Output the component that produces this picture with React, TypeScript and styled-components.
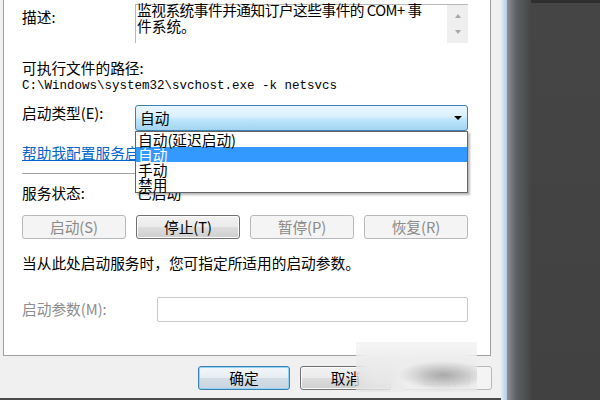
import React from "react";
import styled, { createGlobalStyle } from "styled-components";

const GlobalStyle = createGlobalStyle`
  html, body { margin: 0; padding: 0; width: 600px; height: 400px; overflow: hidden; background: #454545; }
  #root { width: 600px; height: 400px; }
  * { box-sizing: border-box; }
`;

const Screen = styled.div`
  width: 600px;
  height: 400px;
  display: flex;
  overflow: hidden;
  font-family: "Noto Sans CJK SC", "Noto Sans", sans-serif;
  font-size: 14.7px;
  line-height: 16px;
  color: #000;
`;

const Dialog = styled.div`
  position: relative;
  flex: none;
  width: 501px;
  height: 400px;
  background: #f0f0f0;
  display: flex;
  flex-direction: column;
  border-bottom: 2px solid #4a4a4a;
`;

const Frame = styled.div`
  flex: none;
  width: 6px;
  background: linear-gradient(to right, #e4edf7, #b3cbe4);
`;

const Shade = styled.div`
  flex: none;
  width: 24px;
  background: linear-gradient(to right, #8a9097, #5c5f63 40%, #454545);
`;

const Desktop = styled.div`
  flex: 1;
  background: linear-gradient(#2f2f2f 0 3px, #454545 3px, #414141);
`;

const Panel = styled.div`
  margin-left: 3px;
  width: 488px;
  height: 356px;
  flex: none;
  background: #fff;
  border: 1px solid #a0a0a0;
  border-top: none;
  padding: 0 22px 0 18px;
  display: flex;
  flex-direction: column;
`;

const Row = styled.div<{ $top: number; $h?: number }>`
  display: flex;
  align-items: flex-start;
  margin-top: ${(p) => p.$top}px;
  ${(p) => (p.$h ? `height: ${p.$h}px;` : "")}
  flex: none;
`;

const Label = styled.div<{ $w: number; $pt?: number; $muted?: boolean }>`
  flex: none;
  width: ${(p) => p.$w}px;
  padding-top: ${(p) => p.$pt ?? 0}px;
  color: ${(p) => (p.$muted ? "#8d8d8d" : "#000")};
  white-space: nowrap;
`;

const TextBox = styled.div`
  flex: 1;
  height: 39px;
  display: flex;
  border-top: 1px solid #b8b8b8;
  border-left: 1px solid #b8b8b8;
`;

const DescText = styled.div`
  flex: 1;
  margin-top: -3px;
  padding-left: 1px;
  white-space: nowrap;
`;

const Line = styled.span<{ $tight?: boolean }>`
  display: block;
  letter-spacing: ${(p) => (p.$tight ? "-0.5px" : "0")};
`;

const ScrollBar = styled.div`
  flex: none;
  width: 21px;
  background: #efefef;
  display: flex;
  flex-direction: column;
  align-items: center;
  justify-content: space-between;
  padding: 9px 0 9px;
`;

const Arrow = styled.div<{ $dir: "up" | "down"; $color?: string }>`
  width: 0;
  height: 0;
  border-left: 3.5px solid transparent;
  border-right: 3.5px solid transparent;
  ${(p) =>
    p.$dir === "up"
      ? `border-bottom: 4px solid ${p.$color ?? "#a8a8a8"};`
      : `border-top: 4px solid ${p.$color ?? "#a8a8a8"};`}
`;

const Text = styled.div<{ $top: number }>`
  margin-top: ${(p) => p.$top}px;
  white-space: nowrap;
  flex: none;
`;

const PathText = styled.div`
  margin-top: 3px;
  font-family: "Liberation Mono", monospace;
  font-size: 12.5px;
  line-height: 14px;
  white-space: nowrap;
  flex: none;
`;

const Combo = styled.div`
  position: relative;
  flex: 1;
  height: 26px;
  border: 1px solid #3c7fb1;
  border-radius: 3px;
  background: linear-gradient(#eaf6fd 0%, #d9f0fc 45%, #bee6fd 55%, #a2d4f1 100%);
  display: flex;
  align-items: flex-start;
  justify-content: space-between;
  padding: 4px 5px 0 4px;
`;

const ComboArrow = styled.div`
  margin-top: 6px;
  width: 0;
  height: 0;
  border-left: 4px solid transparent;
  border-right: 4px solid transparent;
  border-top: 4px solid #000;
`;

const DropList = styled.div`
  position: absolute;
  left: -1px;
  right: -1px;
  top: 25px;
  z-index: 5;
  background: #fff;
  border: 1px solid #646464;
  box-shadow: 2px 2px 2px rgba(0, 0, 0, 0.28);
`;

const Option = styled.div<{ $active?: boolean }>`
  height: 15px;
  line-height: 15px;
  padding-left: 2px;
  white-space: nowrap;
  background: ${(p) => (p.$active ? "#3399ff" : "transparent")};
  color: ${(p) => (p.$active ? "#fff" : "#000")};
`;

const Link = styled.div`
  margin-top: 14px;
  color: #0066cc;
  text-decoration: underline;
  white-space: nowrap;
  flex: none;
`;

const Separator = styled.div`
  margin-top: 12px;
  height: 1px;
  background: #a0a0a0;
  flex: none;
`;

const ButtonGrid = styled.div`
  margin-top: 14px;
  display: grid;
  grid-template-columns: repeat(4, 1fr);
  gap: 10px;
  flex: none;
`;

const Button = styled.div<{ $disabled?: boolean; $default?: boolean; $w?: number }>`
  height: 24px;
  ${(p) => (p.$w ? `width: ${p.$w}px;` : "")}
  border-radius: 3px;
  display: flex;
  align-items: center;
  justify-content: center;
  white-space: nowrap;
  border: 1px solid
    ${(p) => (p.$default ? "#3c7fb1" : p.$disabled ? "#b5b9bc" : "#707070")};
  color: ${(p) => (p.$disabled ? "#8a8a8a" : "#000")};
  background: ${(p) =>
    p.$disabled
      ? "#f4f4f4"
      : p.$default
      ? "linear-gradient(#f2f6f9 0%, #e6edf3 48%, #d3dde6 52%, #c9d5df 100%)"
      : "linear-gradient(#f2f2f2 0%, #ebebeb 48%, #dddddd 52%, #cfcfcf 100%)"};
  box-shadow: ${(p) =>
    p.$default ? "inset 0 0 0 1px #8fd3f5" : p.$disabled ? "none" : "inset 0 0 0 1px #fcfcfc"};
`;

const Input = styled.div`
  flex: 1;
  height: 25px;
  border: 1px solid #c9c9c9;
  border-radius: 2px;
  background: #fff;
`;

const Footer = styled.div`
  flex: none;
  display: flex;
  justify-content: flex-end;
  gap: 10px;
  padding: 10px 9px 0 0;
`;

const Watermark = styled.div`
  position: absolute;
  left: 356px;
  top: 342px;
  width: 121px;
  height: 50px;
  backdrop-filter: blur(7px);
  background: radial-gradient(ellipse 45px 14px at 72% 66%, rgba(110, 110, 110, 0.5), rgba(150, 150, 150, 0) 100%),
    rgba(236, 236, 236, 0.55);
  z-index: 10;
`;

export default function App() {
  return (
    <>
      <GlobalStyle />
      <Screen>
        <Dialog>
          <Panel>
            <Row $top={4}>
              <Label $w={113} $pt={5}>描述:</Label>
              <TextBox>
                <DescText>
                  <Line $tight>监视系统事件并通知订户这些事件的 COM+ 事</Line>
                  <Line>件系统。</Line>
                </DescText>
                <ScrollBar>
                  <Arrow $dir="up" />
                  <Arrow $dir="down" />
                </ScrollBar>
              </TextBox>
            </Row>
            <Text $top={17}>可执行文件的路径:</Text>
            <PathText>C:\Windows\system32\svchost.exe -k netsvcs</PathText>
            <Row $top={12} $h={26}>
              <Label $w={113} $pt={0}>启动类型(E):</Label>
              <Combo>
                <span>自动</span>
                <ComboArrow />
                <DropList>
                  <Option>自动(延迟启动)</Option>
                  <Option $active>自动</Option>
                  <Option>手动</Option>
                  <Option>禁用</Option>
                </DropList>
              </Combo>
            </Row>
            <Link>帮助我配置服务启动选项。</Link>
            <Separator />
            <Row $top={11}>
              <Label $w={115}>服务状态:</Label>
              <span>已启动</span>
            </Row>
            <ButtonGrid>
              <Button $disabled>启动(S)</Button>
              <Button>停止(T)</Button>
              <Button $disabled>暂停(P)</Button>
              <Button $disabled>恢复(R)</Button>
            </ButtonGrid>
            <Text $top={16}>当从此处启动服务时，您可指定所适用的启动参数。</Text>
            <Row $top={26} $h={25}>
              <Label $w={135} $pt={4} $muted>启动参数(M):</Label>
              <Input />
            </Row>
          </Panel>
          <Footer>
            <Button $default $w={92}>确定</Button>
            <Button $w={91}>取消</Button>
            <Button $w={91} $disabled>应用(A)</Button>
          </Footer>
          <Watermark />
        </Dialog>
        <Frame />
        <Shade />
        <Desktop />
      </Screen>
    </>
  );
}
